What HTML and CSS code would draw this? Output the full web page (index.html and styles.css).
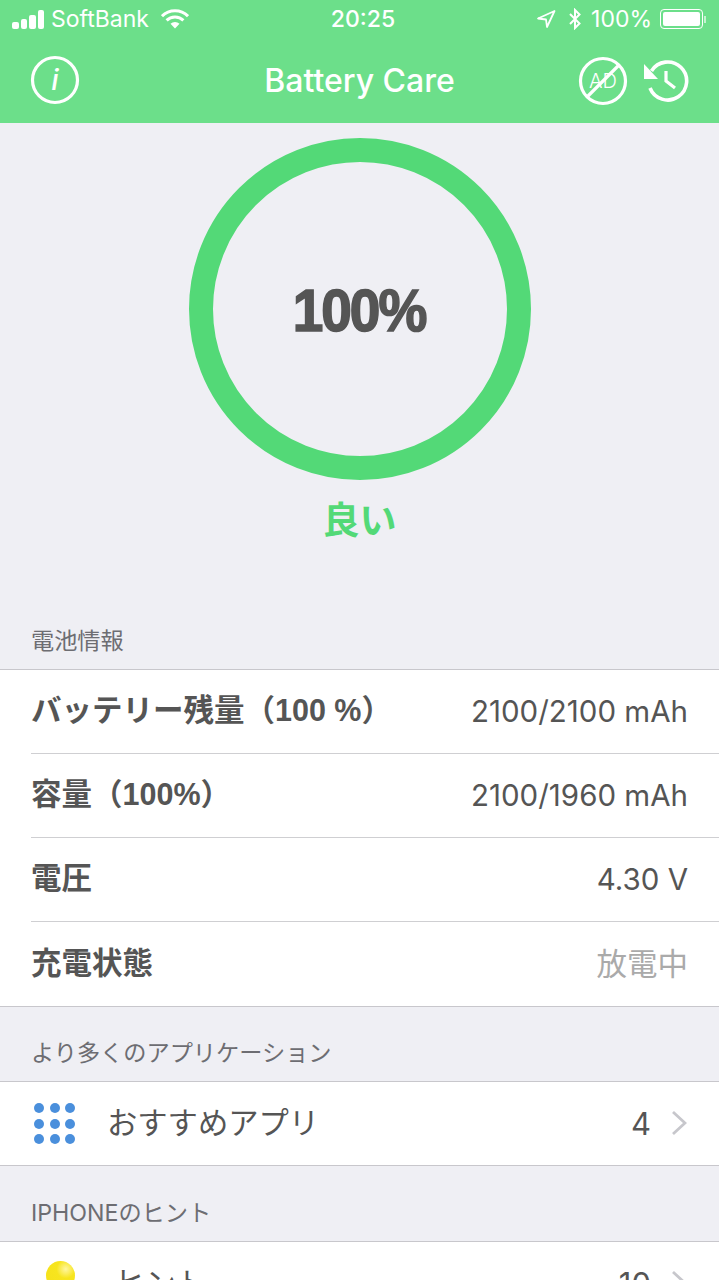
FILE: index.html
```html
<!DOCTYPE html>
<html lang="ja">
<head>
    <meta charset="UTF-8">
    <meta name="viewport" content="width=device-width, initial-scale=1.0">
    <title>Battery Care</title>
    <link rel="stylesheet" href="styles.css">
</head>
<body>
    <div class="phone">
        <header class="top">
            <div class="status">
                <div class="status-left">
                    <div class="signal"><i class="b1"></i><i class="b2"></i><i class="b3"></i><i class="b4"></i></div>
                    <span>SoftBank</span>
                    <svg class="wifi" width="28" height="20" viewBox="0 0 28 20">
                        <path d="M1 7.2 A18.500 18.500 0 0 1 27 7.2" fill="none" stroke="#fff" stroke-width="3"/>
                        <path d="M5.600 11.400 A12 12 0 0 1 22.400 11.400" fill="none" stroke="#fff" stroke-width="3"/>
                        <path d="M9.500 14.800 A6.500 6.500 0 0 1 18.500 14.800 L14 19.500 Z" fill="#fff"/>
                    </svg>
                </div>
                <div class="status-time">20:25</div>
                <div class="status-right">
                    <svg width="20" height="20" viewBox="0 0 20 20">
                        <path d="M18.500 2 L2 9.500 L10 10.500 L11 18 Z" fill="none" stroke="#fff" stroke-width="1.800" stroke-linejoin="round"/>
                    </svg>
                    <svg class="bt" width="14" height="22" viewBox="0 0 14 22">
                        <path d="M2 6 L11.500 15.500 L7 20 V2 L11.500 6.500 L2 16" fill="none" stroke="#fff" stroke-width="2"/>
                    </svg>
                    <span>100%</span>
                    <div class="battery"><div class="battery-fill"></div></div>
                    <div class="battery-tip"></div>
                </div>
            </div>
            <div class="nav">
                <svg class="nav-icon" width="50" height="50" viewBox="0 0 50 50">
                    <circle cx="25" cy="25" r="22.500" fill="none" stroke="#fff" stroke-width="3.200"/>
                    <text x="25" y="35" text-anchor="middle" class="icon-i">i</text>
                </svg>
                <div class="nav-title">Battery Care</div>
                <div class="nav-right">
                    <svg width="50" height="50" viewBox="0 0 50 50">
                        <circle cx="25" cy="25" r="22.500" fill="none" stroke="#fff" stroke-width="3.200"/>
                        <text x="25" y="32" text-anchor="middle" class="icon-ad">AD</text>
                        <path d="M41 9 L9 41" stroke="#fff" stroke-width="3.200"/>
                    </svg>
                    <svg width="46" height="44" viewBox="0 0 46 44">
                        <path d="M8.500 12 A19 19 0 1 1 7 29" fill="none" stroke="#fff" stroke-width="3.600"/>
                        <path d="M1 5 L1 20 L15 20 Z" fill="#fff"/>
                        <path d="M23 12 V22 L32 29" fill="none" stroke="#fff" stroke-width="3.200"/>
                    </svg>
                </div>
            </div>
        </header>

        <section class="gauge">
            <div class="ring"><span class="percent">100%</span></div>
            <div class="gauge-label">良い</div>
        </section>

        <div class="section-head first">電池情報</div>
        <div class="list">
            <div class="row">
                <div class="row-inner"><span class="name">バッテリー残量（100 %）</span><span class="value">2100/2100 mAh</span></div>
            </div>
            <div class="row">
                <div class="row-inner"><span class="name">容量（100%）</span><span class="value">2100/1960 mAh</span></div>
            </div>
            <div class="row">
                <div class="row-inner"><span class="name">電圧</span><span class="value">4.30 V</span></div>
            </div>
            <div class="row">
                <div class="row-inner"><span class="name">充電状態</span><span class="value muted">放電中</span></div>
            </div>
        </div>

        <div class="section-head second">より多くのアプリケーション</div>
        <div class="list">
            <div class="row link">
                <div class="dots"><i></i><i></i><i></i><i></i><i></i><i></i><i></i><i></i><i></i></div>
                <span class="link-name">おすすめアプリ</span>
                <span class="count">4</span>
                <svg class="chevron" width="16" height="26" viewBox="0 0 16 26"><path d="M2 2 L14 13 L2 24" fill="none" stroke="#c7c7cc" stroke-width="2.800"/></svg>
            </div>
        </div>

        <div class="section-head third">IPHONEのヒント</div>
        <div class="list">
            <div class="row link">
                <div class="bulb"></div>
                <span class="link-name">ヒント</span>
                <span class="count">10</span>
                <svg class="chevron" width="16" height="26" viewBox="0 0 16 26"><path d="M2 2 L14 13 L2 24" fill="none" stroke="#c7c7cc" stroke-width="2.800"/></svg>
            </div>
        </div>
    </div>
</body>
</html>
```

FILE: styles.css
```css
html, body {
    margin: 0;
    padding: 0;
}
body {
    font-family: Inter, "Noto Sans CJK JP", sans-serif;
    background-color: #efeff4;
    color: #555;
}
.phone {
    width: 719px;
    height: 1280px;
    overflow: hidden;
}
.top {
    height: 123px;
    background-color: #6cdf8a;
    color: #fff;
}
.status {
    height: 38px;
    display: flex;
    align-items: center;
    justify-content: space-between;
    padding: 0 13px 0 12px;
    font-size: 23px;
    position: relative;
}
.status-left, .status-right {
    display: flex;
    align-items: center;
}
.signal {
    display: flex;
    align-items: flex-end;
    gap: 2px;
    margin-right: 7px;
}
.signal i {
    display: block;
    width: 6.500px;
    background-color: #fff;
    border-radius: 2px;
}
.signal .b1 { height: 7px; }
.signal .b2 { height: 10px; }
.signal .b3 { height: 14px; }
.signal .b4 { height: 19px; }
.wifi {
    margin-left: 12px;
}
.status-time {
    position: absolute;
    left: 7px;
    right: 0;
    text-align: center;
    font-weight: 500;
}
.status-right span {
    margin-left: 9px;
}
.bt {
    margin-left: 12px;
}
.battery {
    width: 43px;
    height: 20px;
    margin-left: 8px;
    border: 1px solid #fff;
    border-radius: 4px;
    padding: 2px;
    box-sizing: border-box;
}
.battery-fill {
    height: 100%;
    background-color: #fff;
    border-radius: 2px;
}
.battery-tip {
    width: 2px;
    height: 7px;
    margin-left: 1px;
    background-color: #c5f2d0;
}
.nav {
    height: 85px;
    display: flex;
    align-items: center;
    justify-content: space-between;
    padding: 0 30px;
    position: relative;
}
.nav-icon {
    margin-bottom: 2px;
}
.nav-title {
    position: absolute;
    left: 0;
    right: 0;
    text-align: center;
    font-size: 32px;
    font-weight: 500;
}
.nav-right {
    display: flex;
    align-items: center;
    gap: 15px;
    margin-right: 0;
}
.icon-i {
    font-family: Inter, sans-serif;
    font-style: italic;
    font-weight: 500;
    font-size: 29px;
    fill: #fff;
}
.icon-ad {
    font-family: Inter, sans-serif;
    font-size: 20px;
    font-weight: 300;
    fill: #fff;
}
.gauge {
    height: 467px;
    box-sizing: border-box;
    padding-top: 15px;
    display: flex;
    flex-direction: column;
    align-items: center;
}
.ring {
    width: 342px;
    height: 342px;
    box-sizing: border-box;
    border: 24px solid #53d977;
    border-radius: 50%;
    display: flex;
    align-items: center;
    justify-content: center;
}
.percent {
    display: inline-block;
    margin: 2px 1px 0 0;
    font-family: "Liberation Sans", sans-serif;
    font-size: 55px;
    font-weight: 700;
    letter-spacing: -2px;
    -webkit-text-stroke: 1.500px #555;
    transform: scaleY(1.08);
}
.gauge-label {
    margin-top: 15px;
    font-size: 37px;
    font-weight: 700;
    line-height: 52px;
    color: #53d977;
}
.section-head {
    height: 75px;
    box-sizing: border-box;
    padding: 30px 31px 0;
    font-size: 23.200px;
    line-height: 32px;
    color: #6d6d72;
}
.section-head.first {
    height: 79px;
    padding-top: 35px;
}
.section-head.second {
    height: 74px;
}
.section-head.third {
    padding-top: 31px;
}
.list {
    background-color: #fff;
    border-top: 1px solid #c8c7cc;
    border-bottom: 1px solid #c8c7cc;
}
.row {
    height: 84px;
    padding-left: 31px;
    box-sizing: border-box;
}
.row-inner {
    height: 100%;
    display: flex;
    align-items: center;
    justify-content: space-between;
    padding-right: 31px;
    border-bottom: 1px solid #cfcfd2;
    box-sizing: border-box;
}
.row:last-child .row-inner {
    border-bottom: none;
}
.name {
    font-family: "Liberation Sans", "Noto Sans CJK JP", sans-serif;
    font-size: 30.500px;
    font-weight: 700;
    line-height: 40px;
    margin-bottom: 3px;
}
.value {
    font-size: 29.500px;
    line-height: 40px;
    margin-bottom: 1px;
}
.value.muted {
    color: #aaa;
    font-size: 30.500px;
}
.row.link {
    height: 83px;
    display: flex;
    align-items: center;
    padding-right: 32px;
}
.dots {
    display: grid;
    grid-template-columns: repeat(3, 10px);
    gap: 5.500px;
    margin: 0 3px;
}
.dots i {
    display: block;
    width: 10px;
    height: 10px;
    border-radius: 50%;
    background-color: #4a8fdc;
}
.bulb {
    width: 29px;
    height: 29px;
    margin: 19px 11px 0 15px;
    border-radius: 50%;
    background: radial-gradient(circle at 68% 28%, #fff6a0 0, #f7e51e 32%, #f5e11a 100%);
    align-self: flex-start;
}
.link-name {
    margin-left: 29px;
    font-size: 30.300px;
    line-height: 40px;
    margin-bottom: 1px;
    flex: 1;
}
.count {
    font-size: 31px;
    margin-right: 20px;
}
.chevron {
    margin-bottom: 2px;
}
```
